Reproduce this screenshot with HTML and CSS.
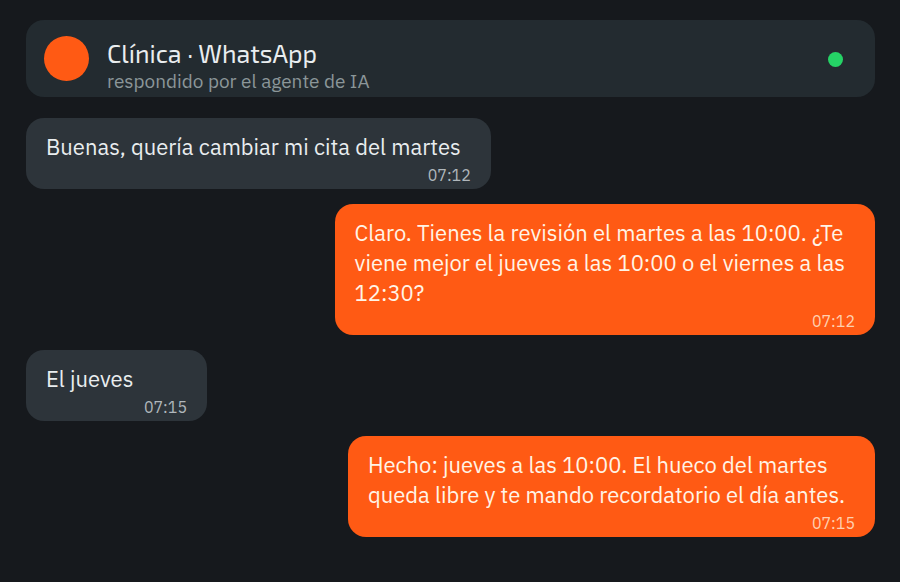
FILE: index.html
```
<!DOCTYPE html>
<html lang="es">
<head>
  <meta charset="UTF-8">
  <meta name="viewport" content="width=device-width, initial-scale=1">
  <title>Clínica · WhatsApp</title>
  <link rel="stylesheet" href="styles.css">
</head>
<body>
  <header class="cabecera">
    <span class="avatar"></span>
    <div class="contacto">
      <h1>Clínica · WhatsApp</h1>
      <p>respondido por el agente de IA</p>
    </div>
    <span class="en-linea"></span>
  </header>

  <main class="chat">
    <div class="mensaje recibido">
      <p>Buenas, quería cambiar mi cita del martes</p>
      <time>07:12</time>
    </div>
    <div class="mensaje enviado">
      <p>Claro. Tienes la revisión el martes a las 10:00. ¿Te<br>viene mejor el jueves a las 10:00 o el viernes a las<br>12:30?</p>
      <time>07:12</time>
    </div>
    <div class="mensaje recibido">
      <p>El jueves</p>
      <time>07:15</time>
    </div>
    <div class="mensaje enviado">
      <p>Hecho: jueves a las 10:00. El hueco del martes<br>queda libre y te mando recordatorio el día antes.</p>
      <time>07:15</time>
    </div>
  </main>
</body>
</html>
```

FILE: styles.css
```
* {
  box-sizing: border-box;
}

body {
  margin: 0;
  padding: 20px 25px 20px 26px;
  background: #16191d;
  color: #e9edef;
  font-family: "IBM Plex Sans", "Noto Sans", sans-serif;
}

h1, p {
  margin: 0;
}

/* cabecera */
.cabecera {
  display: flex;
  align-items: center;
  padding: 16px 32px 4px 18px;
  margin-bottom: 21px;
  background: #232b30;
  border-radius: 18px;
}

.avatar {
  width: 45px;
  height: 45px;
  margin-right: 18px;
  margin-bottom: 12px;
  border-radius: 50%;
  background: #ff5a14;
}

.contacto {
  flex: 1;
  padding-bottom: 2px;
}

.contacto h1 {
  font-family: "Exo 2", "Noto Sans", sans-serif;
  font-size: 25px;
  line-height: 35px;
  font-weight: 400;
}

.contacto p {
  font-size: 19px;
  line-height: 20px;
  color: #8b9699;
}

.en-linea {
  width: 15px;
  height: 15px;
  margin-bottom: 10px;
  border-radius: 50%;
  background: #25d366;
}

/* mensajes */
.chat {
  display: flex;
  flex-direction: column;
  gap: 15px;
}

.mensaje {
  display: flex;
  flex-direction: column;
  min-width: 181px;
  padding: 14px 20px 1px;
  border-radius: 18px;
  font-size: 22px;
  line-height: 30px;
}

.mensaje p {
  padding-right: 10px;
}

.recibido {
  align-self: flex-start;
  background: #2d343a;
}

.enviado {
  align-self: flex-end;
  background: #ff5a14;
  color: #fff4e6;
}

.mensaje time {
  align-self: flex-end;
  font-size: 16px;
  line-height: 26px;
  color: #b0b7bc;
}

.enviado time {
  color: #ffd0b0;
}
```
